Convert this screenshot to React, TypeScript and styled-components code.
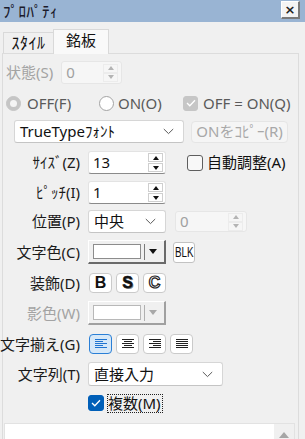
import React from "react";
import styled, { createGlobalStyle } from "styled-components";

const FONT = `"Noto Sans", "Noto Sans CJK JP", sans-serif`;

const Global = createGlobalStyle`
  html, body { margin: 0; padding: 0; background: #f0f0f0; }
  body { font-family: ${FONT}; color: #1a1a1a; }
  #root { width: 305px; height: 439px; overflow: hidden; }
  * { box-sizing: border-box; }
`;

const Window = styled.div`
  width: 305px;
  height: 439px;
  display: flex;
  flex-direction: column;
  background: #f0f0f0;
  font-size: 15px;
`;

const TitleBar = styled.div`
  height: 22px;
  flex: 0 0 22px;
  background: #99b4d3;
  display: flex;
  align-items: center;
  justify-content: space-between;
  padding: 0 5px 0 3px;
`;

const TitleText = styled.span`
  font-size: 15px;
  color: #1b1b2b;
  line-height: 1;
  font-weight: 500;
  letter-spacing: 0.5px;
`;

const CloseBtn = styled.div`
  width: 19px;
  height: 18px;
  margin-top: -2px;
  background: #f4f4f4;
  border-style: solid;
  border-width: 1px 2px 2px 1px;
  border-color: #ffffff #7a7a7a #7a7a7a #ffffff;
  display: flex;
  align-items: center;
  justify-content: center;
  font-family: "DejaVu Sans", sans-serif;
  font-size: 13px;
  font-weight: 700;
  color: #222;
  line-height: 1;
`;

const TabStrip = styled.div`
  height: 31px;
  flex: 0 0 31px;
  display: flex;
  align-items: flex-end;
  padding-left: 3px;
  position: relative;
  z-index: 1;
`;

const Tab = styled.div<{ $active?: boolean }>`
  width: ${(p) => (p.$active ? 56 : 51)}px;
  height: ${(p) => (p.$active ? 25 : 21)}px;
  margin-bottom: ${(p) => (p.$active ? -1 : 0)}px;
  margin-left: ${(p) => (p.$active ? -1 : 0)}px;
  background: ${(p) => (p.$active ? "#f9f9f9" : "#f0f0f0")};
  border: 1px solid #d9d9d9;
  border-bottom: none;
  display: flex;
  align-items: center;
  justify-content: center;
  padding-bottom: ${(p) => (p.$active ? 3 : 0)}px;
  font-size: ${(p) => (p.$active ? 15 : 16)}px;
  letter-spacing: ${(p) => (p.$active ? 0 : 0.5)}px;
  line-height: 1;
  color: #111;
`;

const Panel = styled.div`
  flex: 1;
  margin-left: 2px;
  width: 297px;
  border: 1px solid #dcdcdc;
  border-bottom: none;
  background: #f0f0f0;
  padding-top: 7px;
  display: flex;
  flex-direction: column;
`;

const Row = styled.div<{ $mt?: number; $h: number; $pl?: number }>`
  display: flex;
  align-items: center;
  height: ${(p) => p.$h}px;
  flex: 0 0 ${(p) => p.$h}px;
  margin-top: ${(p) => p.$mt ?? 0}px;
  padding-left: ${(p) => p.$pl ?? 0}px;
`;

const RadioRow = styled.div`
  display: grid;
  grid-template-columns: 93px 84px auto;
  align-items: center;
  height: 16px;
  margin-top: 11px;
  padding-left: 3px;
`;

const Option = styled.label<{ $gap: number }>`
  display: flex;
  align-items: center;
  gap: ${(p) => p.$gap}px;
  color: #5a5a5a;
  font-size: 15px;
  line-height: 1;
  white-space: nowrap;
`;

const Label = styled.span<{ $disabled?: boolean; $free?: boolean }>`
  width: ${(p) => (p.$free ? "auto" : "77px")};
  flex-shrink: 0;
  display: flex;
  justify-content: flex-end;
  white-space: nowrap;
  margin-right: 8px;
  font-size: 15px;
  line-height: 1;
  color: ${(p) => (p.$disabled ? "#a3a3a3" : "#1a1a1a")};
`;

const Spin = styled.div<{ $w: number; $h: number; $disabled?: boolean }>`
  width: ${(p) => p.$w}px;
  height: ${(p) => p.$h}px;
  flex-shrink: 0;
  display: flex;
  align-items: center;
  background: ${(p) => (p.$disabled ? "#f6f6f6" : "#ffffff")};
  border: 1px solid ${(p) => (p.$disabled ? "#e6e6e6" : "#e3e3e3")};
  border-bottom-color: ${(p) => (p.$disabled ? "#e6e6e6" : "#8a8a8a")};
  border-radius: 3px;
  padding-left: 4px;
  font-size: 15px;
  line-height: 1;
  color: ${(p) => (p.$disabled ? "#a0a0a0" : "#111")};
`;

const SpinValue = styled.span`
  flex: 1;
`;

const Arrows = styled.div<{ $disabled?: boolean }>`
  display: flex;
  flex-direction: column;
  gap: ${(p) => (p.$disabled ? 0 : 1)}px;
  margin-right: ${(p) => (p.$disabled ? 3 : 2)}px;
`;

const ArrowBox = styled.div<{ $disabled?: boolean }>`
  width: 15px;
  height: 9px;
  display: flex;
  align-items: center;
  justify-content: center;
  background: ${(p) => (p.$disabled ? "#f6f6f6" : "#ffffff")};
  border: 1px solid ${(p) => (p.$disabled ? "#ececec" : "#cfcfcf")};
`;

const Tri = styled.span<{ $dir: "up" | "down"; $color: string; $w?: number; $hgt?: number }>`
  width: 0;
  height: 0;
  border-left: ${(p) => (p.$w ?? 7) / 2}px solid transparent;
  border-right: ${(p) => (p.$w ?? 7) / 2}px solid transparent;
  ${(p) =>
    p.$dir === "up"
      ? `border-bottom: ${p.$hgt ?? 4}px solid ${p.$color};`
      : `border-top: ${p.$hgt ?? 4}px solid ${p.$color};`}
`;

const Select = styled.div<{ $w: number; $h: number }>`
  width: ${(p) => p.$w}px;
  height: ${(p) => p.$h}px;
  flex-shrink: 0;
  display: flex;
  align-items: center;
  justify-content: space-between;
  background: #ffffff;
  border: 1px solid #d6d6d6;
  border-bottom-color: #c4c4c4;
  border-radius: 3px;
  padding: 0 9px 0 5px;
  font-size: 15px;
  line-height: 1;
  color: #111;
  white-space: nowrap;
`;

const PushButton = styled.div`
  width: 97px;
  height: 22px;
  margin-left: 7px;
  display: flex;
  align-items: center;
  justify-content: center;
  background: #f5f5f5;
  border: 1px solid #e5e5e5;
  border-radius: 4px;
  color: #a8a8a8;
  font-size: 15px;
  line-height: 1;
  white-space: nowrap;
`;

const CheckBox = styled.span<{ $variant: "empty" | "blue" | "disabled"; $size: number }>`
  width: ${(p) => p.$size}px;
  height: ${(p) => p.$size}px;
  flex-shrink: 0;
  border-radius: 3px;
  display: flex;
  align-items: center;
  justify-content: center;
  background: ${(p) =>
    p.$variant === "blue" ? "#005fb8" : p.$variant === "disabled" ? "#c6c6c6" : "#f8f8f8"};
  border: 1px solid
    ${(p) => (p.$variant === "blue" ? "#005fb8" : p.$variant === "disabled" ? "#c6c6c6" : "#5e5e5e")};
`;

const RadioCircle = styled.span<{ $selected?: boolean }>`
  width: 15px;
  height: 15px;
  flex-shrink: 0;
  border-radius: 50%;
  display: flex;
  align-items: center;
  justify-content: center;
  background: ${(p) => (p.$selected ? "#c5c5c5" : "#ffffff")};
  border: 1px solid ${(p) => (p.$selected ? "#c5c5c5" : "#a3a3a3")};
  &::after {
    content: "";
    display: ${(p) => (p.$selected ? "block" : "none")};
    width: 7px;
    height: 7px;
    border-radius: 50%;
    background: #f4f4f4;
  }
`;

const CheckText = styled.span`
  margin-left: 4px;
  font-size: 15px;
  line-height: 1;
  color: #111;
  white-space: nowrap;
`;

const FocusText = styled.span`
  margin-left: 3px;
  padding: 1px 1px 1px 0;
  border: 1px dotted #222;
  font-size: 15px;
  line-height: 1;
  color: #111;
  white-space: nowrap;
`;

const ColorCombo = styled.div<{ $disabled?: boolean }>`
  width: 78px;
  height: 24px;
  flex-shrink: 0;
  display: flex;
  align-items: center;
  background: #f0f0f0;
  border-style: solid;
  border-width: 1px 2px 2px 1px;
  border-color: ${(p) =>
    p.$disabled ? "#ffffff #a0a0a0 #a0a0a0 #ffffff" : "#ffffff #6a6a6a #6a6a6a #ffffff"};
  padding-left: 4px;
`;

const Swatch = styled.span<{ $disabled?: boolean }>`
  width: 48px;
  height: 15px;
  background: #ffffff;
  border: 1px solid ${(p) => (p.$disabled ? "#b8b8b8" : "#8c8c8c")};
`;

const ComboSep = styled.span<{ $disabled?: boolean }>`
  width: 1px;
  height: 16px;
  margin: 0 4px 0 3px;
  background: ${(p) => (p.$disabled ? "#b0b0b0" : "#7a7a7a")};
`;

const SmallButton = styled.div`
  width: 22px;
  height: 21px;
  margin-left: 7px;
  display: flex;
  align-items: center;
  justify-content: center;
  background: #ffffff;
  border: 1px solid #c2c2c2;
  border-radius: 3px;
  overflow: hidden;
`;

const BlkText = styled.span`
  font-family: "Liberation Sans", sans-serif;
  font-size: 14px;
  line-height: 1;
  color: #111;
  transform: scaleX(0.7);
  white-space: nowrap;
`;

const ToolGroup = styled.div`
  display: flex;
  gap: 4px;
  margin-left: 1px;
`;

const ToolButton = styled.div<{ $active?: boolean }>`
  width: 23px;
  height: 20px;
  display: flex;
  align-items: center;
  justify-content: center;
  background: ${(p) => (p.$active ? "#d6e8f8" : "#ffffff")};
  border: 1px solid ${(p) => (p.$active ? "#2a7fd6" : "#cacaca")};
  border-radius: 4px;
  line-height: 1;
`;

const Glyph = styled.span<{ $kind: "bold" | "shadow" | "outline" }>`
  font-family: "Liberation Sans", sans-serif;
  font-size: 16px;
  font-weight: 700;
  line-height: 1;
  color: ${(p) => (p.$kind === "outline" ? "#ffffff" : "#111")};
  ${(p) => (p.$kind === "outline" ? "-webkit-text-stroke: 1.2px #222;" : "")}
  ${(p) => (p.$kind === "shadow" ? "text-shadow: 1px 1px 0 #888; -webkit-text-stroke: 0.5px #111;" : "")}
`;

const TextArea = styled.div`
  flex: 1;
  margin: 12px 3px 0 1px;
  background: #ffffff;
  border: 1px solid #e2e2e2;
  border-bottom: none;
  display: flex;
  justify-content: flex-end;
`;

const ScrollBar = styled.div`
  width: 20px;
  background: #f0f0f0;
  display: flex;
  justify-content: center;
  padding-top: 8px;
`;

const Check = ({ color }: { color: string }) => (
  <svg width="10" height="8" viewBox="0 0 10 8">
    <polyline points="1,4 3.8,6.8 9,1.2" fill="none" stroke={color} strokeWidth="1.3" />
  </svg>
);

const Chevron = () => (
  <svg width="11" height="7" viewBox="0 0 11 7">
    <polyline points="0.8,1 5.5,5.6 10.2,1" fill="none" stroke="#5a5a5a" strokeWidth="1" />
  </svg>
);

const AlignIcon = ({ mode, color }: { mode: "left" | "center" | "right" | "justify"; color: string }) => {
  const lens = mode === "justify" ? [12, 12, 12, 12, 12] : [12, 8, 12, 8, 12];
  return (
    <svg width="12" height="10" viewBox="0 0 12 10" shapeRendering="crispEdges">
      {lens.map((l, i) => {
        const x = mode === "left" || mode === "justify" ? 0 : mode === "right" ? 12 - l : (12 - l) / 2;
        return <rect key={i} x={x} y={i * 2} width={l} height="1" fill={color} />;
      })}
    </svg>
  );
};

const SpinBox = ({ value, w, h, disabled }: { value: string; w: number; h: number; disabled?: boolean }) => {
  const c = disabled ? "#b4b4b4" : "#111";
  return (
    <Spin $w={w} $h={h} $disabled={disabled}>
      <SpinValue>{value}</SpinValue>
      <Arrows $disabled={disabled}>
        <ArrowBox $disabled={disabled}>
          <Tri $dir="up" $color={c} $w={7} $hgt={4} />
        </ArrowBox>
        <ArrowBox $disabled={disabled}>
          <Tri $dir="down" $color={c} $w={7} $hgt={4} />
        </ArrowBox>
      </Arrows>
    </Spin>
  );
};

const ColorPicker = ({ disabled }: { disabled?: boolean }) => (
  <ColorCombo $disabled={disabled}>
    <Swatch $disabled={disabled} />
    <ComboSep $disabled={disabled} />
    <Tri $dir="down" $color={disabled ? "#a8a8a8" : "#111"} $w={9} $hgt={5} />
  </ColorCombo>
);

export default function App() {
  return (
    <>
      <Global />
      <Window>
        <TitleBar>
          <TitleText>ﾌﾟﾛﾊﾟﾃｨ</TitleText>
          <CloseBtn>×</CloseBtn>
        </TitleBar>
        <TabStrip>
          <Tab>ｽﾀｲﾙ</Tab>
          <Tab $active>銘板</Tab>
        </TabStrip>
        <Panel>
          <Row $h={23} $pl={3}>
            <Label $free $disabled>状態(S)</Label>
            <SpinBox value="0" w={61} h={23} disabled />
          </Row>
          <RadioRow>
            <Option $gap={6}>
              <RadioCircle $selected />
              OFF(F)
            </Option>
            <Option $gap={4}>
              <RadioCircle />
              ON(O)
            </Option>
            <Option $gap={5}>
              <CheckBox $variant="disabled" $size={15}>
                <Check color="#ffffff" />
              </CheckBox>
              OFF = ON(Q)
            </Option>
          </RadioRow>
          <Row $mt={9} $h={23} $pl={11}>
            <Select $w={170} $h={23}>
              TrueTypeﾌｫﾝﾄ
              <Chevron />
            </Select>
            <PushButton>ONをｺﾋﾟｰ(R)</PushButton>
          </Row>
          <Row $mt={8} $h={23}>
            <Label>ｻｲｽﾞ(Z)</Label>
            <SpinBox value="13" w={78} h={23} />
            <Row $h={16} $pl={21}>
              <CheckBox $variant="empty" $size={16} />
              <CheckText>自動調整(A)</CheckText>
            </Row>
          </Row>
          <Row $mt={7} $h={23}>
            <Label>ﾋﾟｯﾁ(I)</Label>
            <SpinBox value="1" w={78} h={23} />
          </Row>
          <Row $mt={6} $h={23}>
            <Label>位置(P)</Label>
            <Select $w={78} $h={23}>
              中央
              <Chevron />
            </Select>
            <Row $h={21} $pl={9}>
              <SpinBox value="0" w={72} h={21} disabled />
            </Row>
          </Row>
          <Row $mt={7} $h={24}>
            <Label>文字色(C)</Label>
            <ColorPicker />
            <SmallButton>
              <BlkText>BLK</BlkText>
            </SmallButton>
          </Row>
          <Row $mt={9} $h={20}>
            <Label>装飾(D)</Label>
            <ToolGroup>
              <ToolButton>
                <Glyph $kind="bold">B</Glyph>
              </ToolButton>
              <ToolButton>
                <Glyph $kind="shadow">S</Glyph>
              </ToolButton>
              <ToolButton>
                <Glyph $kind="outline">C</Glyph>
              </ToolButton>
            </ToolGroup>
          </Row>
          <Row $mt={8} $h={24}>
            <Label $disabled>影色(W)</Label>
            <ColorPicker disabled />
          </Row>
          <Row $mt={9} $h={20}>
            <Label>文字揃え(G)</Label>
            <ToolGroup>
              <ToolButton $active>
                <AlignIcon mode="left" color="#1f74d0" />
              </ToolButton>
              <ToolButton>
                <AlignIcon mode="center" color="#222" />
              </ToolButton>
              <ToolButton>
                <AlignIcon mode="right" color="#222" />
              </ToolButton>
              <ToolButton>
                <AlignIcon mode="justify" color="#222" />
              </ToolButton>
            </ToolGroup>
          </Row>
          <Row $mt={8} $h={24}>
            <Label>文字列(T)</Label>
            <Select $w={135} $h={24}>
              直接入力
              <Chevron />
            </Select>
          </Row>
          <Row $mt={9} $h={16} $pl={85}>
            <CheckBox $variant="blue" $size={16}>
              <Check color="#ffffff" />
            </CheckBox>
            <FocusText>複数(M)</FocusText>
          </Row>
          <TextArea>
            <ScrollBar>
              <Tri $dir="up" $color="#a6a6a6" $w={10} $hgt={6} />
            </ScrollBar>
          </TextArea>
        </Panel>
      </Window>
    </>
  );
}
